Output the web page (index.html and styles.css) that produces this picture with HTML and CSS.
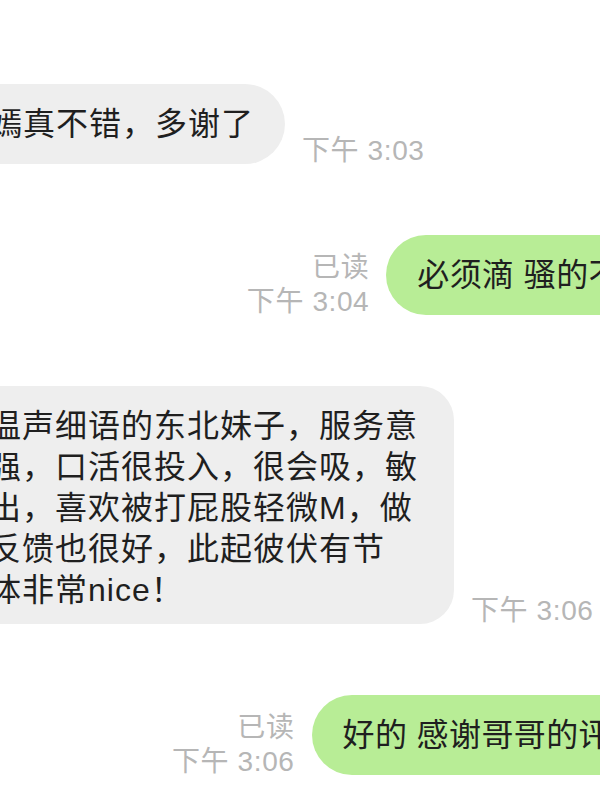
FILE: index.html
```html
<!DOCTYPE html>
<html lang="zh-CN">
<head>
    <meta charset="UTF-8">
    <meta name="viewport" content="width=device-width, initial-scale=1.0">
    <title>聊天记录</title>
    <link rel="stylesheet" href="styles.css">
</head>
<body>
    <div class="chat">
        <!-- 对方消息 -->
        <div class="row in">
            <div class="bubble gray">嫣真不错，多谢了</div>
            <div class="meta">
                <span class="time">下午 3:03</span>
            </div>
        </div>

        <!-- 我的消息 -->
        <div class="row out">
            <div class="meta">
                <span class="read">已读</span>
                <span class="time">下午 3:04</span>
            </div>
            <div class="bubble green cut-a">必须滴 骚的不</div>
        </div>

        <div class="row in">
            <div class="bubble gray multi">
                <span class="line">温声细语的东北妹子，服务意</span>
                <span class="line">强，口活很投入，很会吸，敏</span>
                <span class="line">出，喜欢被打屁股轻微M，做</span>
                <span class="line">反馈也很好，此起彼伏有节</span>
                <span class="line">体非常nice！</span>
            </div>
            <div class="meta">
                <span class="time">下午 3:06</span>
            </div>
        </div>

        <div class="row out">
            <div class="meta">
                <span class="read">已读</span>
                <span class="time">下午 3:06</span>
            </div>
            <div class="bubble green cut-b">好的 感谢哥哥的评</div>
        </div>
    </div>
</body>
</html>
```

FILE: styles.css
```css
/* 聊天页面 */
body {
    font-family: "Liberation Sans", "Noto Sans CJK SC", sans-serif;
    background: #fff;
    color: #1f1f1f;
    margin: 0;
    overflow: hidden;
}

.chat {
    display: flex;
    flex-direction: column;
    gap: 71px;
    padding-top: 84px;
}

.row {
    display: flex;
    align-items: flex-end;
    gap: 17px;
}

.row.out {
    justify-content: flex-end;
}

.bubble {
    flex: none;
    font-size: 32px;
    line-height: 40px;
    letter-spacing: 0.4px;
    padding: 20px 31px;
    border-radius: 40px;
    white-space: nowrap;
}

.gray {
    background: #eeeeee;
    margin-left: -41px;
    letter-spacing: 1px;
}

.green {
    background: #b8ed96;
}

.cut-a {
    margin-right: -52px;
}

.cut-b {
    margin-right: -42px;
}

.multi {
    line-height: 41px;
    padding: 20px 36px 13px 30px;
    border-radius: 34px;
}

.line {
    display: block;
}

.meta {
    display: flex;
    flex-direction: column;
    align-items: flex-end;
    font-size: 28px;
    letter-spacing: 0.6px;
    line-height: 34px;
    color: #b6b6b6;
    margin-bottom: -4px;
}
```
